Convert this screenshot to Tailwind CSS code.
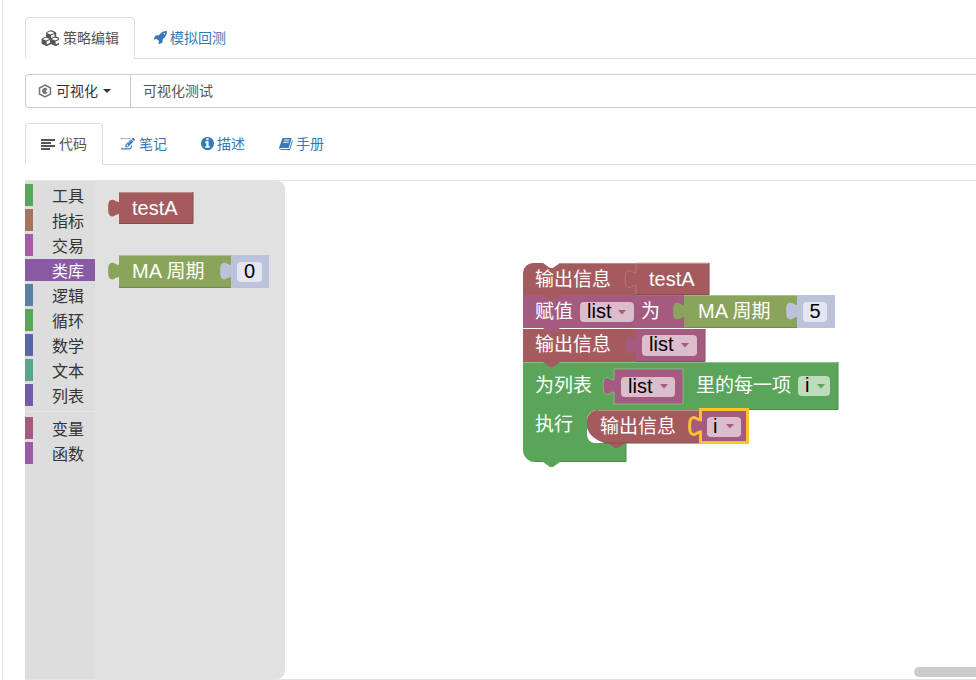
<!DOCTYPE html>
<html lang="zh">
<head>
<meta charset="UTF-8">
<title>策略编辑</title>
<script src="https://cdn.jsdelivr.net/npm/@tailwindcss/browser@4"></script>
</head>
<body class="bg-white overflow-hidden h-[680px] text-sm text-[#555] font-['Liberation_Sans','Noto_Sans_CJK_SC',sans-serif]">
<div class="ml-[2px] border-l border-[#e7e7e7] pl-[22px] pt-[17px] h-[680px] overflow-hidden">

  <!-- top tabs -->
  <ul class="flex gap-[2px] border-b border-[#ddd] h-[42px]">
    <li class="flex items-center gap-1 h-[42px] px-[15px] bg-white border border-[#ddd] border-b-white rounded-t">
      <svg class="w-[18px] h-[16px] fill-[#555]" viewBox="0 0 2048 1792"><path d="M640 1632l384-192v-314l-384 164v342zm-64-454l404-173-404-173-404 173zm1088 454l384-192v-314l-384 164v342zm-64-454l404-173-404-173-404 173zm-448-293l384-165v-266l-384 164v267zm-64-379l441-189-441-189-441 189zm1152 535v416q0 36-19 67t-52 47l-448 224q-25 14-57 14t-57-14l-448-224q-4-2-7-4-2 2-7 4l-448 224q-25 14-57 14t-57-14l-448-224q-33-16-52-47t-19-67v-416q0-38 21.5-70t56.5-48l434-186v-400q0-38 21.5-70t56.5-48l448-192q23-10 50-10t50 10l448 192q35 16 56.5 48t21.5 70v400l434 186q36 16 57 48t21 70z"/></svg>
      <span>策略编辑</span>
    </li>
    <li class="flex items-center gap-[3px] h-[41px] pl-[17px] pr-4 text-[#337ab7]">
      <svg class="w-[13px] h-[13px] fill-[#337ab7]" viewBox="128 128 1600 1600"><path d="M1504 448q0-40-28-68t-68-28-68 28-28 68 28 68 68 28 68-28 28-68zm224-288q0 249-75.5 430.5t-253.5 360.5q-81 80-195 176l-20 379q-2 16-16 26l-384 224q-7 4-16 4-12 0-23-9l-64-64q-13-14-8-32l85-276-281-281-276 85q-3 1-9 1-14 0-23-9l-64-64q-17-19-5-39l224-384q10-14 26-16l379-20q96-114 176-195 188-187 358-258t431-71q14 0 23 9t9 23z"/></svg>
      <span>模拟回测</span>
    </li>
  </ul>

  <!-- name input -->
  <div class="flex mt-[15px] h-[34px] -mr-4 border border-r-0 border-[#ccc] rounded-l">
    <div class="flex items-center w-[105px] pl-[12px] border-r border-[#ccc] text-[#333]">
      <svg class="w-[14px] h-[14px] mr-[4px]" viewBox="0 0 14 14"><path d="M7 1 12.5 4v6L7 13 1.500 10V4z" fill="none" stroke="#777" stroke-width="1.500"/><path d="M9.500 5.200A3 3 0 1 0 9.500 8.800L7.500 7z" fill="#777"/></svg>
      <span>可视化</span>
      <span class="ml-[5px] border-x-[4px] border-x-transparent border-t-[4px] border-t-[#333]"></span>
    </div>
    <div class="flex items-center pl-[12px]">可视化测试</div>
  </div>

  <!-- editor tabs -->
  <ul class="flex gap-[2px] mt-[15px] border-b border-[#ddd] h-[42px]">
    <li class="flex items-center gap-1 h-[42px] px-[15px] bg-white border border-[#ddd] border-b-white rounded-t">
      <svg class="w-[14px] h-[12px] fill-[#555]" viewBox="0 0 14 12"><path d="M0 1h14v2H0zM0 4h10v2H0zM0 7h14v2H0zM0 10h9v2H0z"/></svg>
      <span>代码</span>
    </li>
    <li class="flex items-center gap-[4px] h-[41px] px-4 text-[#337ab7]">
      <svg class="w-[14px] h-[12px] fill-[#337ab7]" viewBox="128 224 1664 1344"><path d="M888 1184l116-116-152-152-116 116v56h96v96h56zm440-720q-16-16-33 1l-350 350q-17 17-1 33t33-1l350-350q17-17 1-33zm80 594v190q0 119-84.500 203.500t-203.500 84.500h-832q-119 0-203.500-84.500t-84.500-203.500v-832q0-119 84.500-203.500t203.500-84.500h832q63 0 117 25 15 7 18 23 3 17-9 29l-49 49q-14 14-32 8-23-6-45-6h-832q-66 0-113 47t-47 113v832q0 66 47 113t113 47h832q66 0 113-47t47-113v-126q0-13 9-22l64-64q15-15 35-7t20 29zm-96-738l288 288-672 672h-288v-288zm444 132l-92 92-288-288 92-92q28-28 68-28t68 28l152 152q28 28 28 68t-28 68z"/></svg>
      <span>笔记</span>
    </li>
    <li class="flex items-center gap-[3px] h-[41px] px-4 text-[#337ab7]">
      <svg class="w-[13px] h-[13px] fill-[#337ab7]" viewBox="128 128 1536 1536"><path d="M1152 1376v-160q0-14-9-23t-23-9h-96v-512q0-14-9-23t-23-9h-320q-14 0-23 9t-9 23v160q0 14 9 23t23 9h96v320h-96q-14 0-23 9t-9 23v160q0 14 9 23t23 9h448q14 0 23-9t9-23zm-128-896v-160q0-14-9-23t-23-9h-192q-14 0-23 9t-9 23v160q0 14 9 23t23 9h192q14 0 23-9t9-23zm640 416q0 209-103 385.500t-279.500 279.500-385.500 103-385.500-103-279.500-279.500-103-385.500 103-385.500 279.500-279.500 385.500-103 385.500 103 279.500 279.500 103 385.500z"/></svg>
      <span>描述</span>
    </li>
    <li class="flex items-center gap-[3px] h-[41px] px-4 text-[#337ab7]">
      <svg class="w-[14px] h-[12px] fill-[#337ab7]" viewBox="64 192 1664 1472"><path d="M1703 478q40 57 18 129l-275 906q-19 64-76.500 107.500t-122.500 43.500h-923q-77 0-148.500-53.500t-99.500-131.500q-24-67-2-127 0-4 3-27t4-37q1-8-3-21.500t-3-19.500q2-11 8-21t16.500-23.500 16.500-23.500q23-38 45-91.500t30-91.500q3-10 .5-30t-.5-28q3-11 17-28t17-23q21-36 42-92t25-90q1-9-2.500-32t.5-28q4-13 22-30.500t22-22.500q19-26 42.500-84.500t27.500-96.500q1-8-3-25.500t-2-26.500q2-8 9-18t18-23 17-21q8-12 16.500-30.500t15-35 16-36 19.500-32 26.500-23.500 36-11.500 47.500 5.500l-1 3q38-9 51-9h761q74 0 114 56t18 130l-274 906q-36 119-71.500 153.500t-128.500 34.500h-869q-27 0-38 15-11 16-1 43 24 70 144 70h923q29 0 56-15.500t35-41.500l300-987q7-22 5-57 38 15 59 43zm-1064 2q-4 13 2 22.500t20 9.500h608q13 0 25.500-9.500t16.500-22.500l21-64q4-13-2-22.500t-20-9.500h-608q-13 0-25.500 9.500t-16.500 22.500zm-83 256q-4 13 2 22.500t20 9.500h608q13 0 25.500-9.500t16.500-22.500l21-64q4-13-2-22.500t-20-9.500h-608q-13 0-25.500 9.500t-16.500 22.500z"/></svg>
      <span>手册</span>
    </li>
  </ul>

  <!-- blockly workspace -->
  <div class="relative flex mt-[15px] h-[500px] border-y border-[#e3e3e3] bg-white">
    <!-- toolbox -->
    <div class="w-[70px] h-full bg-[#ddd] pt-[3px] text-base text-[#333] leading-[26px]">
      <div class="flex h-[22px] mb-[3px]"><span class="w-2 bg-[#5ba55b]"></span><span class="ml-[19px]">工具</span></div>
      <div class="flex h-[22px] mb-[3px]"><span class="w-2 bg-[#a5745b]"></span><span class="ml-[19px]">指标</span></div>
      <div class="flex h-[22px] mb-[3px]"><span class="w-2 bg-[#a55ba5]"></span><span class="ml-[19px]">交易</span></div>
      <div class="flex h-[22px] mb-[3px] bg-[#8a5ba5] text-white"><span class="w-2"></span><span class="ml-[19px]">类库</span></div>
      <div class="flex h-[22px] mb-[3px]"><span class="w-2 bg-[#5b80a5]"></span><span class="ml-[19px]">逻辑</span></div>
      <div class="flex h-[22px] mb-[3px]"><span class="w-2 bg-[#5ba55b]"></span><span class="ml-[19px]">循环</span></div>
      <div class="flex h-[22px] mb-[3px]"><span class="w-2 bg-[#5b67a5]"></span><span class="ml-[19px]">数学</span></div>
      <div class="flex h-[22px] mb-[3px]"><span class="w-2 bg-[#5ba58c]"></span><span class="ml-[19px]">文本</span></div>
      <div class="flex h-[22px] mb-[3px]"><span class="w-2 bg-[#745ba5]"></span><span class="ml-[19px]">列表</span></div>
      <div class="h-px mt-[5px] mb-[5px] ml-[2px] bg-[#e6e6e6]"></div>
      <div class="flex h-[22px] mb-[3px]"><span class="w-2 bg-[#a55b80]"></span><span class="ml-[19px]">变量</span></div>
      <div class="flex h-[22px] mb-[3px]"><span class="w-2 bg-[#995ba5]"></span><span class="ml-[19px]">函数</span></div>
    </div>
    <!-- flyout -->
    <div class="w-[190px] h-full bg-[#e1e1e1] rounded-r-[8px]"></div>

    <!-- blocks -->
    <svg class="absolute inset-0 w-[951px] h-[498px] text-[19px]" viewBox="25 181 951 498" fill="#fff">
      <!-- flyout blocks -->
      <path d="M119 192H193V224H119V214c-2 0-3 1-5 2c-2 1-5 0-5.500-3c-.5-3-.5-7 0-10c.5-3 3.500-4 5.500-3c2 1 3 2 5 2Z" fill="#a55b5e"/>
      <path d="M119 192.500H193" stroke="#c08d8f" fill="none"/><path d="M119 223.500H193V192" stroke="#8a4c4f" fill="none"/>
      <text x="132" y="215" class="text-[20px]">testA</text>

      <path d="M119 255H231V288H119V277c-2 0-3 1-5 2c-2 1-5 0-5.500-3c-.5-3-.5-7 0-10c.5-3 3.500-4 5.500-3c2 1 3 2 5 2Z" fill="#8aa55b"/>
      <path d="M119 255.500H231" stroke="#adc08d" fill="none"/><path d="M119 287.500H231" stroke="#738a4c" fill="none"/>
      <text x="132" y="278"><tspan class="text-[20px]">MA </tspan>周期</text>
      <path d="M231 255H269V288H231V277c-2 0-3 1-5 2c-2 1-5 0-5.500-3c-.5-3-.5-7 0-10c.5-3 3.500-4 5.500-3c2 1 3 2 5 2Z" fill="#bdc2db"/>
      <rect x="237" y="262" width="25" height="20" rx="4" fill="#e4e6f1"/>
      <text x="249.500" y="278" fill="#000" text-anchor="middle" class="text-[20px]">0</text>

      <!-- for-each block -->
      <path d="M523 362H838V410H597a10 10 0 0 0-10 10V435a8 8 0 0 0 8 8H626V462H560l-7 5h-3l-7-5H535a12 12 0 0 1-12-12Z" fill="#5ba55b"/>
      <path d="M523 362.500H838" stroke="#8dc08d" fill="none"/><path d="M838 362V409.500H700M626 443V461.500H560M543 461.500H535" stroke="#4c8a4c" fill="none"/>
      <text x="535" y="392">为列表</text>
      <text x="696" y="392">里的每一项</text>
      <text x="535" y="431">执行</text>
      <rect x="798" y="376" width="32" height="20" rx="4" fill="#bddbbd"/>
      <text x="805" y="392" fill="#000" class="text-[20px]">i</text>
      <path d="M817 384h8l-4 4.500z" fill="#5ba55b"/>

      <path d="M614 369H683V404H614V392c-2 0-3 1-5 2c-2 1-5 0-5.500-3c-.5-3-.5-7 0-10c.5-3 3.500-4 5.500-3c2 1 3 2 5 2Z" fill="#a55b80" stroke="#8dc08d" stroke-width=".8"/>
      <rect x="621" y="377" width="54" height="20" rx="4" fill="#dbbdcc"/>
      <text x="628" y="393" fill="#000" class="text-[20px]">list</text>
      <path d="M660 384h8l-4 4.500z" fill="#a55b80"/>

      <!-- inner print block -->
      <path d="M587 421a11 11 0 0 1 11-11H700V443H625l-7 5h-3l-7-5H604Q590 438 587 428Z" fill="#a55b5e"/>
      <path d="M598 410.500H700" stroke="#c08d8f" fill="none"/><path d="M604 443H700" stroke="#8a4c4f" fill="none"/>
      <text x="600" y="433">输出信息</text>

      <!-- highlighted shadow -->
      <path d="M700.500 409.500H747.500V442.500H700.500V432c-2 0-3 1-5 2c-2 1-5 0-5.500-3c-.5-3-.5-7 0-10c.5-3 3.500-4 5.500-3c2 1 3 2 5 2Z" fill="#a55b80" stroke="#fcc22c" stroke-width="3"/>
      <rect x="707" y="417" width="34" height="20" rx="4" fill="#dbbdcc"/>
      <text x="713" y="433" fill="#000" class="text-[20px]">i</text>
      <path d="M726 424h8l-4 4.500z" fill="#a55b80"/>

      <!-- print list -->
      <path d="M523 329H636V362H560l-7 5h-3l-7-5H523Z" fill="#a55b5e"/>
      <path d="M636 329H705V362H636V351c-2 0-3 1-5 2c-2 1-5 0-5.500-3c-.5-3-.5-7 0-10c.5-3 3.500-4 5.500-3c2 1 3 2 5 2Z" fill="#a55b80"/>
      <path d="M636 361.500H705V329" stroke="#8a4c6a" fill="none"/>
      <text x="535" y="351">输出信息</text>
      <rect x="642" y="335" width="55" height="21" rx="4" fill="#dbbdcc"/>
      <text x="649" y="351" fill="#000" class="text-[20px]">list</text>
      <path d="M681 343h8l-4 4.500z" fill="#a55b80"/>

      <!-- assign -->
      <path d="M523 295H684V328H560l-7 5h-3l-7-5H523Z" fill="#a55b80"/>
      <path d="M684 295H797V328H684V317c-2 0-3 1-5 2c-2 1-5 0-5.500-3c-.5-3-.5-7 0-10c.5-3 3.500-4 5.500-3c2 1 3 2 5 2Z" fill="#8aa55b"/>
      <path d="M684 327.500H797" stroke="#738a4c" fill="none"/><path d="M684 295.500H797" stroke="#adc08d" fill="none"/>
      <path d="M797 295H835V328H797V317c-2 0-3 1-5 2c-2 1-5 0-5.500-3c-.5-3-.5-7 0-10c.5-3 3.500-4 5.500-3c2 1 3 2 5 2Z" fill="#bdc2db"/>
      <text x="535" y="318">赋值</text>
      <rect x="580" y="302" width="54" height="20" rx="4" fill="#dbbdcc"/>
      <text x="587" y="318" fill="#000" class="text-[20px]">list</text>
      <path d="M618 310h8l-4 4.500z" fill="#a55b80"/>
      <text x="641" y="318">为</text>
      <text x="698" y="318"><tspan class="text-[20px]">MA </tspan>周期</text>
      <rect x="803" y="302" width="24" height="20" rx="4" fill="#e4e6f1"/>
      <text x="815" y="318" fill="#000" text-anchor="middle" class="text-[20px]">5</text>

      <!-- print testA -->
      <path d="M523 273a10 10 0 0 1 10-10H543l7 5h3l7-5H636V295H560l-7 5h-3l-7-5H523Z" fill="#a55b5e"/>
      <path d="M636 263H709V295H636V285c-2 0-3 1-5 2c-2 1-5 0-5.500-3c-.5-3-.5-7 0-10c.5-3 3.500-4 5.500-3c2 1 3 2 5 2Z" fill="#a55b5e" stroke="#c08d8f" stroke-width=".6"/>
      <path d="M560 263.500H709" stroke="#c08d8f" fill="none"/><path d="M636 294.500H709V263" stroke="#8a4c4f" fill="none"/>
      <text x="535" y="286">输出信息</text>
      <text x="649" y="286" class="text-[20px]">testA</text>
    </svg>

    <!-- scrollbar -->
    <div class="absolute right-0 bottom-[2px] w-[62px] h-[10px] bg-[#ccc] rounded-l-[5px]"></div>
  </div>
</div>
</body>
</html>
